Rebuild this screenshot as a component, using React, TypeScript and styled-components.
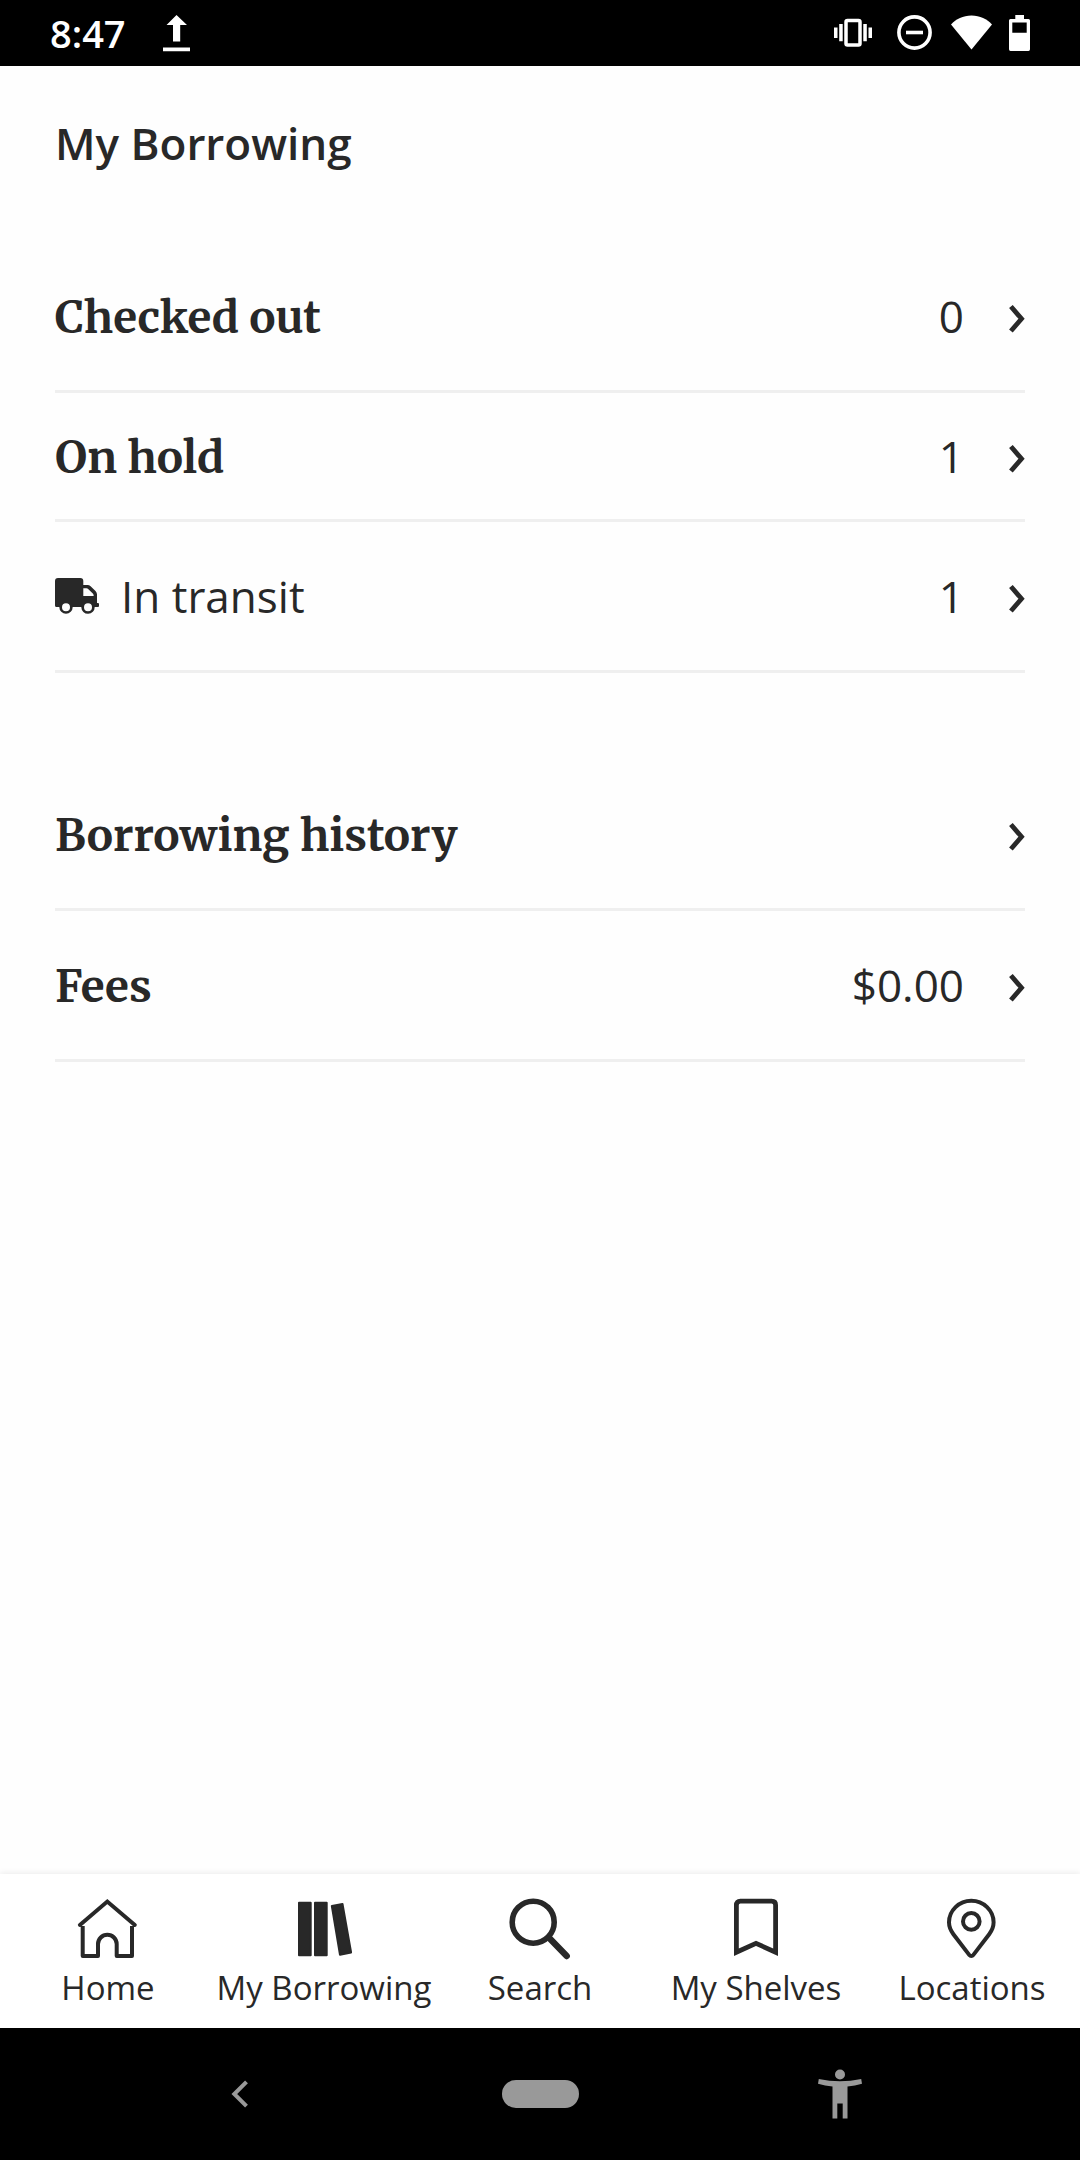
import React from "react";
import styled, { createGlobalStyle } from "styled-components";

const ink = "#282828";
const sans = '"Open Sans", "Noto Sans", sans-serif';
const serif = 'Merriweather, "DejaVu Serif Condensed", "Liberation Serif", serif';

const GlobalStyle = createGlobalStyle`
  *, *::before, *::after { box-sizing: border-box; }
  body { margin: 0; background: #fefefe; color: ${ink}; font-family: ${sans}; }
  svg { display: block; flex: none; }
`;

const Screen = styled.div`
  display: flex;
  flex-direction: column;
  min-height: 100vh;
`;

const StatusBar = styled.header`
  display: flex;
  align-items: center;
  justify-content: space-between;
  height: 66px;
  padding: 0 50px;
  background: #000;
  color: #fff;
`;

const StatusGroup = styled.div<{ $gap: number }>`
  display: flex;
  align-items: center;
  gap: ${(p) => p.$gap}px;
`;

const Clock = styled.time`
  font-size: 38px;
  font-weight: 600;
  line-height: 52px;
`;

const Content = styled.main`
  flex: 1;
  padding: 47px 55px;
`;

const Title = styled.h1`
  margin: 0 0 69px;
  font-size: 44px;
  font-weight: 600;
  line-height: 60px;
`;

const List = styled.ul`
  margin: 0;
  padding: 0;
  list-style: none;

  & + & {
    margin-top: 87px;
  }
`;

const RowLink = styled.a<{ $compact?: boolean }>`
  display: flex;
  align-items: center;
  gap: 22px;
  padding: ${(p) => (p.$compact ? 33 : 44)}px 0;
  border-bottom: 3px solid #efefef;
  color: inherit;
  font-size: 44px;
  line-height: 60px;
  text-decoration: none;
`;

const RowHeading = styled.span`
  flex: 1;
  padding-top: 4px;
  font-family: ${serif};
  font-weight: 700;
  line-height: 56px;
`;

const RowText = styled.span`
  flex: 1;
`;

const RowValue = styled.span`
  margin-right: 23px;
`;

const TabBar = styled.nav`
  display: grid;
  grid-template-columns: repeat(5, 1fr);
  padding: 24px 0 17px;
  background: #fff;
  box-shadow: 0 -1px 6px rgba(0, 0, 0, 0.08);
`;

const Tab = styled.a`
  display: flex;
  flex-direction: column;
  align-items: center;
  gap: 3px;
  color: inherit;
  font-size: 33px;
  line-height: 46px;
  text-decoration: none;
  white-space: nowrap;
`;

const SystemBar = styled.footer`
  display: grid;
  grid-template-columns: repeat(3, 1fr);
  align-items: center;
  justify-items: center;
  height: 132px;
  padding: 0 90px;
  background: #000;
`;

const SystemButton = styled.button`
  display: flex;
  padding: 0;
  border: 0;
  background: none;
  color: #999;
`;

const HomePill = styled.span`
  width: 77px;
  height: 28px;
  border-radius: 14px;
  background: currentColor;
`;

const UploadIcon = () => (
  <svg width="27" height="38" viewBox="0 0 27 38" fill="currentColor" aria-hidden="true">
    <path d="M13.5 1 24 11H17.2V27.5H10V11H3.5ZM0 33.5H27V37.2H0Z" />
  </svg>
);

const VibrateIcon = () => (
  <svg width="46" height="36" viewBox="0 0 46 36" fill="currentColor" aria-hidden="true">
    <rect x="12" y="5.5" width="14" height="24.5" rx="1.5" fill="none" stroke="currentColor" strokeWidth="3.5" />
    <path d="M0 12.5H3.5V23H0ZM5.2 9H8.7V26.3H5.2ZM29.3 9H32.8V26.3H29.3ZM34.5 12.5H38V23H34.5Z" />
  </svg>
);

const DoNotDisturbIcon = () => (
  <svg width="36" height="36" viewBox="0 0 36 36" fill="none" stroke="currentColor" strokeWidth="3.6" aria-hidden="true">
    <circle cx="17.5" cy="17.5" r="15.6" />
    <path d="M9 17.5H26" />
  </svg>
);

const WifiIcon = () => (
  <svg width="42" height="36" viewBox="0 0 42 36" fill="currentColor" aria-hidden="true">
    <path d="M21.5 34.5 1 9.5C6 4 13 .5 21.5 .5S37 4 42 9.5Z" />
  </svg>
);

const BatteryIcon = () => (
  <svg width="21" height="36" viewBox="0 0 21 36" fill="currentColor" aria-hidden="true">
    <path
      fillRule="evenodd"
      d="M6.3 0H15V4H19.5Q21 4 21 5.5V34.2Q21 36 19.5 36H1.5Q0 36 0 34.2V5.5Q0 4 1.5 4H6.3ZM3.3 7.5V17.7H17.7V7.5Z"
    />
  </svg>
);

const Chevron = () => (
  <svg width="16" height="34" viewBox="0 0 16 34" fill="none" stroke="currentColor" strokeWidth="4.8" aria-hidden="true">
    <path d="M1.9 7.5 12.5 19.8 1.9 32" />
  </svg>
);

const TruckIcon = () => (
  <svg width="44" height="36" viewBox="0 0 44 36" fill="currentColor" aria-hidden="true">
    <path
      fillRule="evenodd"
      d="M3 0H25.3Q28.3 0 28.3 3V7H32.5Q34.3 7 35.6 8.2L40.5 13Q42 14.5 42 16.5V25H43Q44 25 44 26V28Q44 29 43 29H39.7A6.7 6.7 0 0 1 26.3 29.3V29H17.7A6.7 6.7 0 0 1 4.3 29H1.5Q0 29 0 27.5V3Q0 0 3 0ZM28.3 10.3V18H38.7Q38.7 16.5 37.8 15.6L33.4 11.2Q32.5 10.3 31.5 10.3ZM11 25.3A4 4 0 1 0 11 33.3 4 4 0 1 0 11 25.3ZM33 25.3A4 4 0 1 0 33 33.3 4 4 0 1 0 33 25.3Z"
    />
  </svg>
);

const TabSvg = ({ children, width = 4 }: { children: React.ReactNode; width?: number }) => (
  <svg
    width="64"
    height="64"
    viewBox="0 0 64 64"
    fill="none"
    stroke="currentColor"
    strokeWidth={width}
    aria-hidden="true"
  >
    {children}
  </svg>
);

const HouseIcon = () => (
  <TabSvg>
    <path strokeLinejoin="round" d="M6.7 28V58H22V46.1A9.35 9.35 0 0 1 40.7 46.1V58H56V28" />
    <path strokeLinecap="round" d="M3.9 27 31.3 3.6 58.8 27" />
  </TabSvg>
);

const BooksIcon = () => (
  <TabSvg width={2}>
    <g fill="currentColor" strokeLinejoin="round">
      <path d="M7 4.7H18.7V57.3H7ZM23 4.7H34.7V57.3H23ZM39.8 7.9 50.5 5.9 59.1 54.4 48 56.8Z" />
    </g>
  </TabSvg>
);

const SearchIcon = () => (
  <TabSvg width={5.6}>
    <circle cx="25.2" cy="24.2" r="21" />
    <path strokeWidth="6.4" strokeLinecap="round" d="M41.5 40.3 58.7 58" />
  </TabSvg>
);

const BookmarkIcon = () => (
  <TabSvg width={4.8}>
    <path d="M12.4 54.3V7.1Q12.4 3.1 16.4 3.1H47.6Q51.6 3.1 51.6 7.1V54.3L32 45.3Z" />
  </TabSvg>
);

const PinIcon = () => (
  <TabSvg>
    <path
      strokeLinejoin="round"
      d="M31.3 2.7C19 2.7 9 12.5 9 24.3 9 29 10.7 32.6 13.4 36.2L29.4 57.1A2.4 2.4 0 0 0 33.2 57.1L49.2 36.2C51.9 32.6 53.6 29 53.6 24.3 53.6 12.5 43.6 2.7 31.3 2.7Z"
    />
    <circle cx="31.3" cy="23.4" r="8.3" />
  </TabSvg>
);

const BackIcon = () => (
  <svg width="18" height="28" viewBox="0 0 18 28" fill="none" stroke="currentColor" strokeWidth="4" aria-hidden="true">
    <path d="M15.5 1.8 3.3 14 15.5 26.2" />
  </svg>
);

const AccessibilityIcon = () => (
  <svg width="44" height="50" viewBox="0 0 44 50" fill="currentColor" aria-hidden="true">
    <circle cx="22" cy="5.5" r="5" />
    <path d="M.8 10Q22 14.6 43.2 10L44 14.8Q37 16.9 29.5 17.5V49.5H24.7V34.5H19.3V49.5H14.5V17.5Q7 16.9 0 14.8Z" />
  </svg>
);

interface RowProps {
  label: string;
  value?: string;
  icon?: React.ReactNode;
  compact?: boolean;
}

const Row = ({ label, value, icon, compact }: RowProps) => (
  <li>
    <RowLink href="#" $compact={compact}>
      {icon}
      {icon ? <RowText>{label}</RowText> : <RowHeading>{label}</RowHeading>}
      {value && <RowValue>{value}</RowValue>}
      <Chevron />
    </RowLink>
  </li>
);

const tabs = [
  { label: "Home", Icon: HouseIcon },
  { label: "My Borrowing", Icon: BooksIcon },
  { label: "Search", Icon: SearchIcon },
  { label: "My Shelves", Icon: BookmarkIcon },
  { label: "Locations", Icon: PinIcon },
];

export default function App() {
  return (
    <Screen>
      <GlobalStyle />
      <StatusBar>
        <StatusGroup $gap={37}>
          <Clock>8:47</Clock>
          <UploadIcon />
        </StatusGroup>
        <StatusGroup $gap={17}>
          <VibrateIcon />
          <DoNotDisturbIcon />
          <WifiIcon />
          <BatteryIcon />
        </StatusGroup>
      </StatusBar>

      <Content>
        <Title>My Borrowing</Title>
        <List>
          <Row label="Checked out" value="0" />
          <Row label="On hold" value="1" compact />
          <Row label="In transit" value="1" icon={<TruckIcon />} />
        </List>
        <List>
          <Row label="Borrowing history" />
          <Row label="Fees" value="$0.00" />
        </List>
      </Content>

      <TabBar aria-label="Main">
        {tabs.map(({ label, Icon }) => (
          <Tab key={label} href="#" aria-current={label === "My Borrowing" ? "page" : undefined}>
            <Icon />
            {label}
          </Tab>
        ))}
      </TabBar>

      <SystemBar>
        <SystemButton type="button" aria-label="Back">
          <BackIcon />
        </SystemButton>
        <SystemButton type="button" aria-label="Home screen">
          <HomePill />
        </SystemButton>
        <SystemButton type="button" aria-label="Accessibility">
          <AccessibilityIcon />
        </SystemButton>
      </SystemBar>
    </Screen>
  );
}
